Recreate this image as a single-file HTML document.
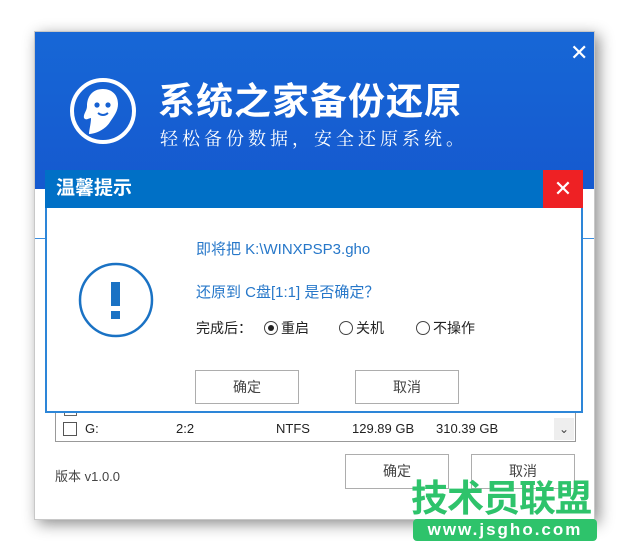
<!DOCTYPE html>
<html><head><meta charset="utf-8"><style>
*{margin:0;padding:0;box-sizing:border-box}
body{width:640px;height:545px;background:#fff;position:relative;overflow:hidden;font-family:"Liberation Sans","Noto Sans CJK SC",sans-serif}
.a{position:absolute}
.win{left:34px;top:31px;width:561px;height:489px;background:#fff;border:1px solid #c8c8c8;box-shadow:4px 4px 14px rgba(0,0,0,.45)}
.btn{position:absolute;border:1px solid #adadad;background:#fff;color:#444;font-size:14px;text-align:center}
.r{position:absolute;width:14px;height:14px;border:1px solid #444;border-radius:50%;top:3px}
.r.on:after{content:"";position:absolute;left:3px;top:3px;width:6px;height:6px;border-radius:50%;background:#222}
</style></head><body>
<div class="a win">
 <div class="a" style="left:0;top:0;width:559px;height:157px;background:linear-gradient(#1767d6,#1559cf)"></div>
 <div class="a" style="left:535px;top:8px;color:#fff;font-size:22px;line-height:26px">✕</div>
 <svg class="a" style="left:33px;top:44px" width="70" height="70" viewBox="0 0 70 70">
  <circle cx="35" cy="35" r="31" fill="none" stroke="#fff" stroke-width="4"/>
  <path d="M35 13c-11 0-16 8-16 17 0 5-4 8-3 12 2 3 5 0 7 0 0 6-2 12-2 16 6 0 16-4 21-12 4-6 8-11 8-18 0-9-6-15-15-15z" fill="#fff"/>
  <circle cx="29" cy="29" r="2.6" fill="#1661d2"/><circle cx="40" cy="29" r="2.6" fill="#1661d2"/>
  <path d="M30 37q5 4 10 0" stroke="#1661d2" stroke-width="2" fill="none"/>
 </svg>
 <div class="a" style="left:123px;top:44px;color:#fff;font-size:37px;font-weight:bold;letter-spacing:1px;line-height:44px;font-family:'Noto Sans CJK SC',sans-serif">系统之家备份还原</div>
 <div class="a" style="left:125px;top:94px;color:#fff;font-size:18px;letter-spacing:4px;line-height:24px;font-family:'Noto Serif CJK SC',serif">轻松备份数据，安全还原系统。</div>
 <div class="a" style="left:0;top:206px;width:559px;height:1px;background:#3a8ee0"></div>
 <div class="a" style="left:20px;top:365px;width:521px;height:45px;border:1px solid #999;background:#fff"></div>
 <div class="a" style="left:29px;top:371px;width:13px;height:13px;border:1px solid #666"></div>
 <div class="a" style="left:28px;top:390px;width:14px;height:14px;border:1px solid #555;background:#fff"></div>
 <div class="a" style="left:50px;top:389px;font-size:13px;color:#222">G:</div>
 <div class="a" style="left:141px;top:389px;font-size:13px;color:#222">2:2</div>
 <div class="a" style="left:241px;top:389px;font-size:13px;color:#222">NTFS</div>
 <div class="a" style="left:317px;top:389px;font-size:13px;color:#222">129.89 GB</div>
 <div class="a" style="left:401px;top:389px;font-size:13px;color:#222">310.39 GB</div>
 <div class="a" style="left:519px;top:386px;width:20px;height:22px;background:#eee;color:#444;font-size:12px;text-align:center;line-height:22px">⌄</div>
 <div class="a" style="left:20px;top:434px;font-size:13px;color:#444">版本 v1.0.0</div>
 <div class="btn" style="left:310px;top:422px;width:104px;height:35px;line-height:33px">确定</div>
 <div class="btn" style="left:436px;top:422px;width:104px;height:35px;line-height:33px">取消</div>
</div>
<div class="a" style="left:45px;top:170px;width:538px;height:243px;background:#fff;border:2px solid #2d86d8;border-top:none">
 <div class="a" style="left:-2px;top:0;width:538px;height:38px;background:#0070c6"></div>
 <div class="a" style="left:9px;top:7px;color:#fff;font-size:19px;font-weight:bold;line-height:24px">温馨提示</div>
 <div class="a" style="left:496px;top:0;width:40px;height:38px;background:#ee2124;color:#fff;font-size:22px;text-align:center;line-height:38px">✕</div>
 <svg class="a" style="left:30px;top:91px" width="78" height="78" viewBox="0 0 78 78"><circle cx="39" cy="39" r="36" fill="none" stroke="#1a72c4" stroke-width="2.5"/><rect x="34" y="21" width="9" height="24" fill="#1a72c4"/><rect x="34" y="50" width="9" height="8" fill="#1a72c4"/></svg>
 <div class="a" style="left:149px;top:68px;font-size:15px;color:#2677c9;line-height:24px">即将把 K:\WINXPSP3.gho</div>
 <div class="a" style="left:149px;top:111px;font-size:15px;color:#2677c9;line-height:24px">还原到 C盘[1:1] 是否确定？</div>
 <div class="a" style="left:149px;top:148px;width:300px;height:20px;font-size:14px;color:#222;line-height:20px">
  <span class="a" style="left:0">完成后：</span>
  <span class="r on" style="left:68px"></span><span class="a" style="left:85px">重启</span>
  <span class="r" style="left:143px"></span><span class="a" style="left:160px">关机</span>
  <span class="r" style="left:220px"></span><span class="a" style="left:237px">不操作</span>
 </div>
 <div class="btn" style="left:148px;top:200px;width:104px;height:34px;line-height:32px">确定</div>
 <div class="btn" style="left:308px;top:200px;width:104px;height:34px;line-height:32px">取消</div>
</div>
<div class="a" style="left:411px;top:474px;color:#2ec36b;font-size:37px;font-weight:bold;line-height:42px;font-family:'Noto Sans CJK SC',sans-serif;letter-spacing:-1px">技术员联盟</div>
<div class="a" style="left:413px;top:519px;width:184px;height:22px;background:#2ec36b;border-radius:4px;color:#fff;font-size:17px;font-weight:bold;text-align:center;line-height:22px;letter-spacing:2px">www.jsgho.com</div>
</body></html>
